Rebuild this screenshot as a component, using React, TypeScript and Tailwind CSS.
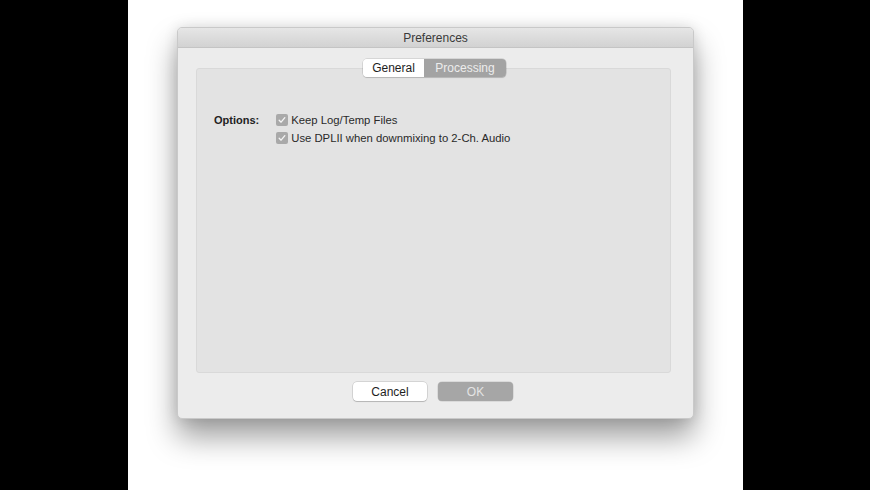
import React from "react";

const font = { fontFamily: '"Liberation Sans", Arial, sans-serif' };

const Check = () => (
  <span className="flex h-[12px] w-[12px] items-center justify-center rounded-[2px] bg-[#a9a9a9]">
    <svg viewBox="0 0 12 12" className="h-[10px] w-[10px]">
      <path d="M2.6 6.3 L4.9 8.6 L9.4 3.2" fill="none" stroke="#f4f4f4" strokeWidth="1.6" strokeLinecap="round" strokeLinejoin="round" />
    </svg>
  </span>
);

const Option = ({ label }: { label: string }) => (
  <div className="flex h-[18px] items-center gap-[3px]">
    <Check />
    <span className="text-[11.3px] text-[#2a2a2a]">{label}</span>
  </div>
);

export default function App() {
  return (
    <div className="flex h-[490px] w-[870px] overflow-hidden" style={font}>
      <div className="h-full w-[128px] bg-black" />
      <div className="h-full w-[615px] bg-white pl-[49px] pt-[27px]">
        <div className="flex h-[392px] w-[517px] flex-col overflow-hidden rounded-[5px] border border-[#c9c9c9] bg-[#ececec] shadow-[0_18px_30px_rgba(0,0,0,0.38),0_0_14px_rgba(0,0,0,0.12)]">
          {/* title bar */}
          <div className="flex h-[20px] items-center justify-center border-b border-[#c4c4c4] bg-gradient-to-b from-[#e6e6e6] to-[#d2d2d2] text-[12px] text-[#3a3a3a]">
            Preferences
          </div>

          <div className="flex flex-1 flex-col pl-[18px] pr-[23px] pt-[11px]">
            {/* tabs */}
            <div className="relative z-10 flex justify-center pl-[3px]">
              <div className="flex h-[18px] overflow-hidden rounded-[4px] text-[12px] shadow-[0_0_0_0.5px_rgba(0,0,0,0.18),0_1px_1px_rgba(0,0,0,0.12)]">
                <div className="flex w-[61px] items-center justify-center bg-white text-[#1e1e1e]">General</div>
                <div className="flex w-[82px] items-center justify-center bg-[#a3a3a3] text-[#ededed]">Processing</div>
              </div>
            </div>

            {/* panel */}
            <div className="-mt-[9px] h-[305px] w-[475px] rounded-[3px] border border-[#d9d9d9] bg-[#e3e3e3] pl-[17px] pt-[42px]">
              <div className="flex gap-[17px]">
                <div className="flex h-[18px] items-center text-[11px] font-bold text-[#222]">Options:</div>
                <div className="flex flex-col">
                  <Option label="Keep Log/Temp Files" />
                  <Option label="Use DPLII when downmixing to 2-Ch. Audio" />
                </div>
              </div>
            </div>

            {/* buttons */}
            <div className="flex gap-[11px] pl-[157px] pt-[9px]">
              <div className="flex h-[19px] w-[74px] items-center justify-center rounded-[4px] bg-white text-[12px] text-[#1e1e1e] shadow-[0_0_0_0.5px_rgba(0,0,0,0.2),0_1px_1px_rgba(0,0,0,0.15)]">
                Cancel
              </div>
              <div className="flex h-[19px] w-[75px] items-center justify-center rounded-[4px] bg-[#a6a6a6] text-[12px] text-[#e4e4e4] shadow-[0_0_0_0.5px_rgba(0,0,0,0.15)]">
                OK
              </div>
            </div>
          </div>
        </div>
      </div>
      <div className="h-full flex-1 bg-black" />
    </div>
  );
}
